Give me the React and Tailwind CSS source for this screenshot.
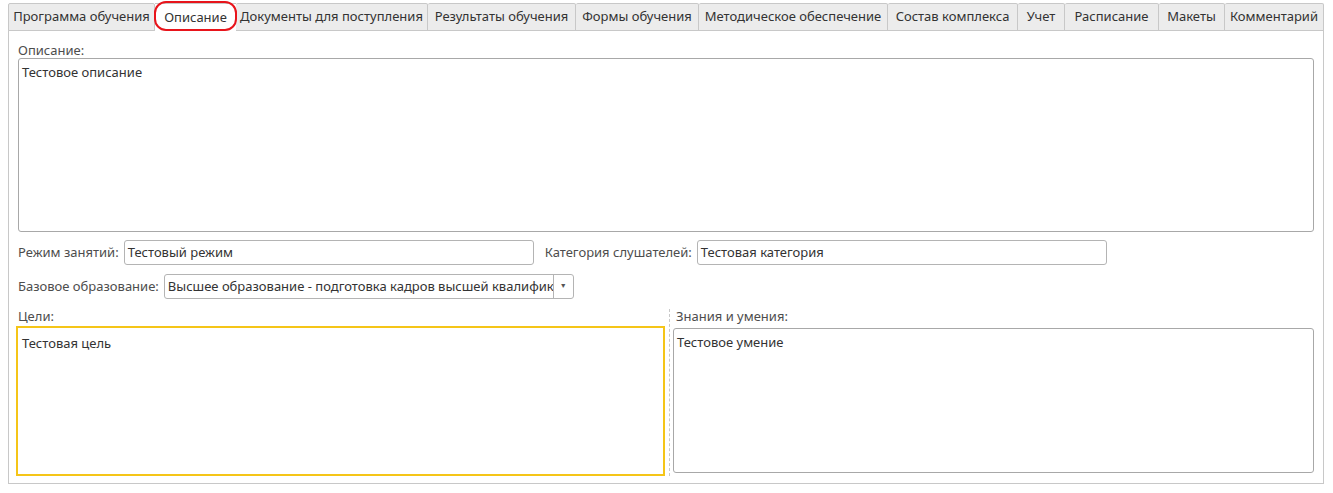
import React from "react";

const tabs = [
  ["Программа обучения", 147],
  ["Описание", 81],
  ["Документы для поступления", 192],
  ["Результаты обучения", 148],
  ["Формы обучения", 123],
  ["Методическое обеспечение", 189],
  ["Состав комплекса", 130],
  ["Учет", 47],
  ["Расписание", 94],
  ["Макеты", 66],
  ["Комментарий", 99],
];

const widths = {
  147: "w-[147px]", 81: "w-[81px]", 192: "w-[192px]", 148: "w-[148px]", 123: "w-[123px]",
  189: "w-[189px]", 130: "w-[130px]", 47: "w-[47px]", 94: "w-[94px]", 66: "w-[66px]", 99: "w-[99px]",
};

function Field({ value, className }) {
  return (
    <div className={`h-[25px] border border-[#b4b4b4] rounded-[3px] bg-white px-[3px] flex items-center text-[#333] ${className}`}>
      {value}
    </div>
  );
}

export default function App() {
  return (
    <div className="w-[1333px] h-[493px] bg-white font-['Liberation_Sans'] text-[13px] text-[#4d4d4d] pl-[8px] pt-[3px]">
      <div className="flex h-[28px] w-[1316px]">
        {tabs.map(([name, w], i) =>
          i === 1 ? (
            <div key={name} className={`${widths[w]} relative bg-white border-t border-[#c8c8c8] flex items-center justify-center text-[#333] z-10 h-[29px]`}>
              <div className="absolute inset-x-[-1px] top-[-3px] h-[30px] border-[2.5px] border-[#e8141b] rounded-[12px]" />
              {name}
            </div>
          ) : (
            <div key={name} className={`${widths[w]} bg-[#ececec] border border-[#c8c8c8] border-l-0 first:border-l flex items-center justify-center text-[#333] rounded-t-[2px]`}>
              {name}
            </div>
          )
        )}
      </div>
      <div className="w-[1316px] h-[454px] border border-[#c8c8c8] -mt-px pl-[9px] pr-[9px]">
        <div className="pt-[10px] h-[27px]">Описание:</div>
        <div className="h-[174px] border border-[#a8a8a8] rounded-[3px] px-[3px] pt-[4px] text-[#333]">Тестовое описание</div>
        <div className="flex items-center mt-[8px] gap-[5px]">
          <span>Режим занятий:</span>
          <Field value="Тестовый режим" className="w-[410px]" />
          <span className="ml-[6px]">Категория слушателей:</span>
          <Field value="Тестовая категория" className="w-[410px]" />
        </div>
        <div className="flex items-center mt-[9px] gap-[5px]">
          <span>Базовое образование:</span>
          <div className="h-[25px] w-[410px] border border-[#b4b4b4] rounded-[3px] flex text-[#333]">
            <div className="w-[388px] overflow-hidden whitespace-nowrap px-[3px] flex items-center">Высшее образование - подготовка кадров высшей квалификации</div>
            <div className="w-[20px] border-l border-[#b4b4b4] flex items-center justify-center text-[7px] text-[#555]">▼</div>
          </div>
        </div>
        <div className="flex mt-[10px] h-[167px]">
          <div className="w-[649px] -ml-[2px] flex flex-col">
            <div className="h-[17px] pl-[2px] leading-[15px]">Цели:</div>
            <div className="flex-1 border-2 border-[#f5c518] px-[4px] pt-[6px] text-[#333]">Тестовая цель</div>
          </div>
          <div className="w-[8px] flex justify-center">
            <div className="border-l border-dashed border-[#c8c8c8] h-full" />
          </div>
          <div className="flex-1 flex flex-col pb-[3px]">
            <div className="h-[19px] pl-[3px] leading-[15px]">Знания и умения:</div>
            <div className="flex-1 border border-[#a8a8a8] rounded-[3px] px-[3px] pt-[4px] text-[#333]">Тестовое умение</div>
          </div>
        </div>
      </div>
    </div>
  );
}
